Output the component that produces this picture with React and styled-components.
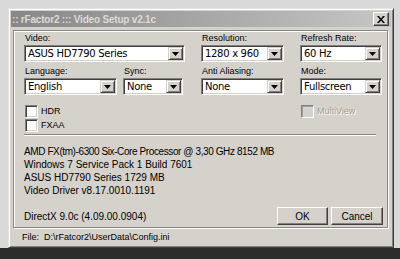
import React from "react";
import styled, { createGlobalStyle } from "styled-components";

const Global = createGlobalStyle`
  html, body { margin: 0; padding: 0; }
  body {
    background: #d8d8d8;
    font-family: "Liberation Sans", Arial, sans-serif;
    font-size: 10px;
    color: #000;
  }
`;

const Screen = styled.div`
  width: 400px;
  height: 259px;
  display: flex;
  flex-direction: column;
  overflow: hidden;
`;

const Desktop = styled.div`
  flex: 0 0 248px;
  box-sizing: border-box;
  padding: 8px 0 0 8px;
  background: #d9d9d9;
`;

const Taskbar = styled.div`
  flex: 1;
  background: #2c2c2c;
`;

const Window = styled.div`
  width: 386px;
  height: 240px;
  box-sizing: border-box;
  background: #d5d2cc;
  border: 1px solid;
  border-color: #e4e2de #404040 #404040 #e4e2de;
  box-shadow: inset 1px 1px #ffffff, inset -1px -1px #808080;
  padding: 2px;
  display: flex;
  flex-direction: column;
`;

const TitleBar = styled.div`
  height: 16px;
  flex: 0 0 16px;
  display: flex;
  align-items: center;
  justify-content: space-between;
  background: linear-gradient(to right, #878787, #c6c6c6);
  padding: 0 2px 0 1px;
`;

const TitleText = styled.span`
  font-weight: bold;
  font-size: 10px;
  letter-spacing: -0.2px;
  color: #dedbd6;
  white-space: pre;
`;

const CloseButton = styled.div`
  width: 16px;
  height: 14px;
  box-sizing: border-box;
  background: #d5d2cc;
  border: 1px solid;
  border-color: #ffffff #404040 #404040 #ffffff;
  box-shadow: inset -1px -1px #808080;
  display: flex;
  align-items: center;
  justify-content: center;
`;

const GroupBox = styled.div`
  margin: 3px 3px 0 2px;
  height: 198px;
  box-sizing: border-box;
  border: 1px solid #8a8780;
  box-shadow: inset 1px 1px #ffffff, 1px 1px #ffffff;
  padding: 1px 4px 0 10px;
  display: flex;
  flex-direction: column;
`;

const FormGrid = styled.div`
  display: grid;
  grid-template-columns: 161px 83px 82px;
  column-gap: 16px;
  row-gap: 3px;
`;

const Field = styled.div`
  display: flex;
  flex-direction: column;
  width: ${(p) => (p.$w ? `${p.$w}px` : "auto")};
`;

const FieldPair = styled.div`
  display: flex;
  gap: 6px;
`;

const Label = styled.label`
  font-size: 9px;
  line-height: 13px;
  height: 13px;
  white-space: nowrap;
  padding-left: 1px;
`;

const Select = styled.div`
  height: 17px;
  box-sizing: border-box;
  border: 1px solid;
  border-color: #808080 #ffffff #ffffff #808080;
  box-shadow: inset 1px 1px #404040, inset -1px -1px #d4d0c8;
  background: #ffffff;
  display: flex;
  align-items: stretch;
  padding: 1px;
`;

const SelectValue = styled.span`
  flex: 1;
  padding-left: 2px;
  font-family: "DejaVu Sans", Verdana, sans-serif;
  font-size: 10px;
  letter-spacing: -0.3px;
  line-height: 13px;
  white-space: nowrap;
  overflow: hidden;
`;

const ArrowButton = styled.span`
  width: 15px;
  box-sizing: border-box;
  background: #d5d2cc;
  border: 1px solid;
  border-color: #d4d0c8 #404040 #404040 #d4d0c8;
  box-shadow: inset 1px 1px #ffffff, inset -1px -1px #808080;
  display: flex;
  align-items: center;
  justify-content: center;
`;

const Checks = styled.div`
  margin-top: 6px;
  display: flex;
  flex-direction: column;
`;

const CheckRow = styled.div`
  height: 14px;
  display: flex;
  align-items: center;
  gap: 3px;
  padding-left: 1px;
  font-size: 9px;
  color: ${(p) => (p.$disabled ? "#a09d98" : "#000")};
  text-shadow: ${(p) => (p.$disabled ? "1px 1px #ffffff" : "none")};
`;

const Box = styled.span`
  width: 13px;
  height: 13px;
  box-sizing: border-box;
  border: 1px solid;
  border-color: #808080 #ffffff #ffffff #808080;
  box-shadow: ${(p) =>
    p.$disabled
      ? "inset 1px 1px #a0a0a0"
      : "inset 1px 1px #404040, inset -1px -1px #d4d0c8"};
  background: ${(p) => (p.$disabled ? "#d5d2cc" : "#ffffff")};
`;

const Separator = styled.div`
  margin-top: 2px;
  width: 352px;
  height: 1px;
  background: #8a8780;
  box-shadow: 0 1px #ffffff;
`;

const Info = styled.div`
  margin-top: 10px;
  display: flex;
  flex-direction: column;
  line-height: 13px;
  white-space: nowrap;
`;

const InfoLine = styled.span`
  letter-spacing: ${(p) => (p.$tight ? "-0.4px" : "0")};
`;

const BottomRow = styled.div`
  margin-top: 10px;
  display: flex;
  align-items: center;
  justify-content: space-between;
`;

const Buttons = styled.div`
  display: flex;
  gap: 3px;
`;

const Button = styled.div`
  width: ${(p) => p.$w}px;
  height: 18px;
  box-sizing: border-box;
  background: #d5d2cc;
  border: 1px solid;
  border-color: #ffffff #404040 #404040 #ffffff;
  box-shadow: inset -1px -1px #808080;
  display: flex;
  align-items: center;
  justify-content: center;
  font-size: 10px;
`;

const StatusBar = styled.div`
  flex: 1;
  display: flex;
  align-items: center;
  padding-left: 11px;
  font-size: 9px;
  white-space: pre;
`;

const Arrow = () => (
  <svg width="7" height="4" viewBox="0 0 7 4">
    <path d="M0 0h7L3.5 4z" fill="#000" />
  </svg>
);

const CloseIcon = () => (
  <svg width="8" height="7" viewBox="0 0 8 7">
    <path d="M0 0h2l2 2.5L6 0h2L5 3.5 8 7H6L4 4.5 2 7H0l3-3.5z" fill="#000" />
  </svg>
);

const Dropdown = ({ value }) => (
  <Select>
    <SelectValue>{value}</SelectValue>
    <ArrowButton>
      <Arrow />
    </ArrowButton>
  </Select>
);

const Check = ({ label, disabled }) => (
  <CheckRow $disabled={disabled}>
    <Box $disabled={disabled} />
    <span>{label}</span>
  </CheckRow>
);

export default function App() {
  return (
    <>
      <Global />
      <Screen>
        <Desktop>
          <Window>
            <TitleBar>
              <TitleText>:: rFactor2 ::: Video Setup v2.1c</TitleText>
              <CloseButton>
                <CloseIcon />
              </CloseButton>
            </TitleBar>
            <GroupBox>
              <FormGrid>
                <Field>
                  <Label>Video:</Label>
                  <Dropdown value="ASUS HD7790 Series" />
                </Field>
                <Field>
                  <Label>Resolution:</Label>
                  <Dropdown value="1280 x 960" />
                </Field>
                <Field>
                  <Label>Refresh Rate:</Label>
                  <Dropdown value="60 Hz" />
                </Field>
                <FieldPair>
                  <Field $w={93}>
                    <Label>Language:</Label>
                    <Dropdown value="English" />
                  </Field>
                  <Field $w={60}>
                    <Label>Sync:</Label>
                    <Dropdown value="None" />
                  </Field>
                </FieldPair>
                <Field>
                  <Label>Anti Aliasing:</Label>
                  <Dropdown value="None" />
                </Field>
                <Field>
                  <Label>Mode:</Label>
                  <Dropdown value="Fullscreen" />
                </Field>
                <Checks>
                  <Check label="HDR" />
                  <Check label="FXAA" />
                </Checks>
                <div />
                <Checks>
                  <Check label="MultiView" disabled />
                </Checks>
              </FormGrid>
              <Separator />
              <Info>
                <InfoLine $tight>AMD FX(tm)-6300 Six-Core Processor @ 3,30 GHz 8152 MB</InfoLine>
                <InfoLine>Windows 7 Service Pack 1 Build 7601</InfoLine>
                <InfoLine>ASUS HD7790 Series 1729 MB</InfoLine>
                <InfoLine>Video Driver v8.17.0010.1191</InfoLine>
              </Info>
              <BottomRow>
                <span>DirectX 9.0c (4.09.00.0904)</span>
                <Buttons>
                  <Button $w={51}>OK</Button>
                  <Button $w={52}>Cancel</Button>
                </Buttons>
              </BottomRow>
            </GroupBox>
            <StatusBar>{"File:  D:\\rFatcor2\\UserData\\Config.ini"}</StatusBar>
          </Window>
        </Desktop>
        <Taskbar />
      </Screen>
    </>
  );
}
